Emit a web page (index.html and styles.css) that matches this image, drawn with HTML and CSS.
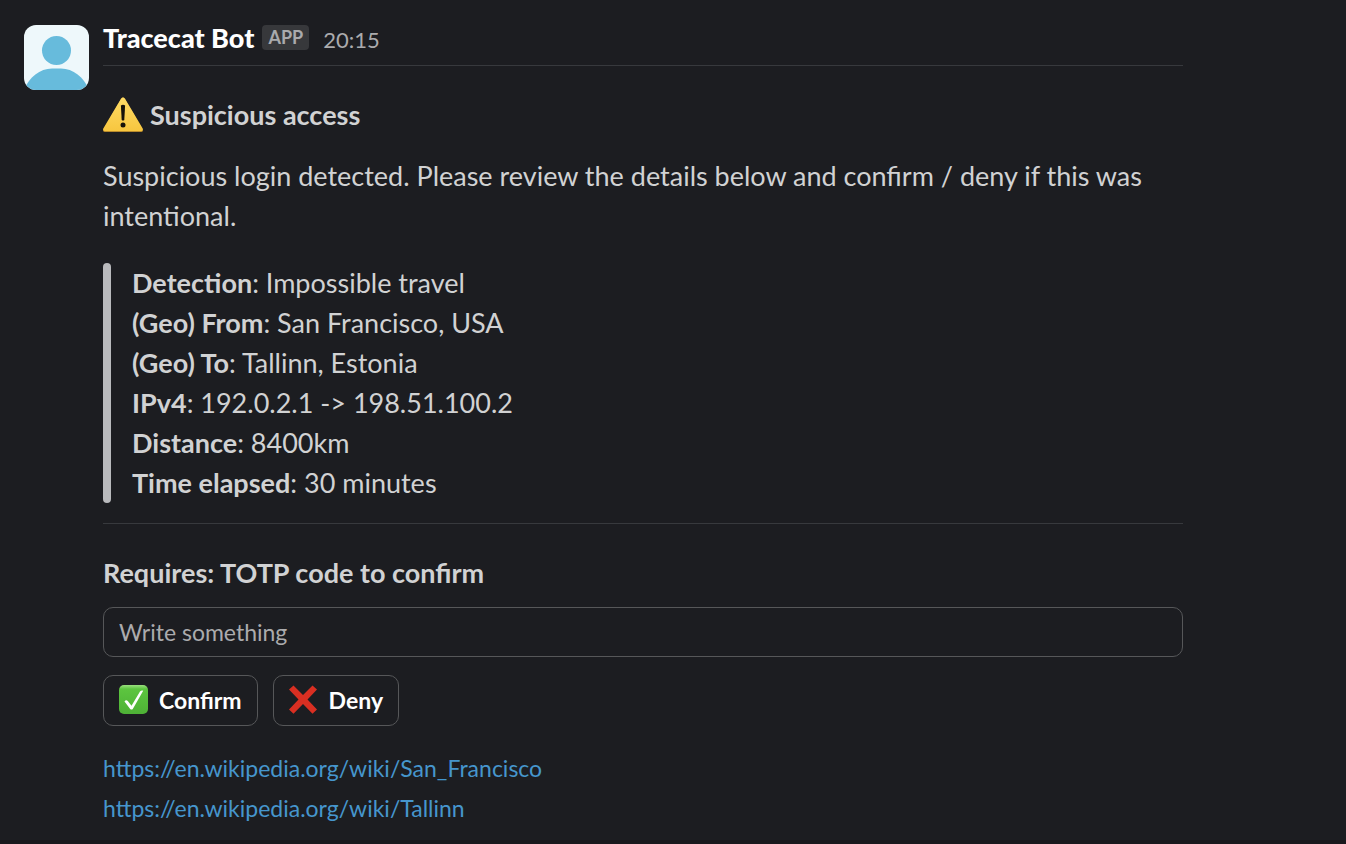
FILE: index.html
```html
<!DOCTYPE html>
<html lang="en">
<head>
<meta charset="utf-8">
<title>Tracecat Bot</title>
<link rel="stylesheet" href="styles.css">
</head>
<body>
<main class="message">
  <svg class="avatar" viewBox="0 0 65 65" role="img" aria-label="Tracecat Bot avatar">
    <rect width="65" height="65" fill="#eef8fb"/>
    <circle cx="32.500" cy="25.500" r="14.500" fill="#67bbdc"/>
    <path d="M0 65C5 52 16 43.500 28 43.500H37C49 43.500 60 52 65 65z" fill="#67bbdc"/>
  </svg>
  <div class="content">
    <header class="byline">
      <span class="name">Tracecat Bot</span>
      <span class="badge">APP</span>
      <time class="time">20:15</time>
    </header>
    <hr class="rule">
    <h1 class="title">
      <svg class="warning" viewBox="0 0 40 36" aria-hidden="true">
        <defs><linearGradient id="sun" x1="0" y1="0" x2="0" y2="1"><stop offset="0" stop-color="#ffdc65"/><stop offset="1" stop-color="#f7c63f"/></linearGradient></defs>
        <path d="M18 2q2-2.800 4 0L39.700 32.500q.6 2.500-1.700 2.500H2q-2.300 0-1.700-2.500z" fill="#b88a2c"/>
        <path d="M18 1.800q2-2.800 4 0L39.700 31.500q.6 2.500-1.700 2.500H2q-2.300 0-1.700-2.500z" fill="url(#sun)"/>
        <path d="M17.900 8.500q2.100-1.500 4.200 0l-.8 14.500q-1.300 1-2.600 0z" fill="#17130a"/>
        <circle cx="20" cy="28" r="2.500" fill="#17130a"/>
      </svg>
      Suspicious access
    </h1>
    <p class="intro">Suspicious login detected. Please review the details below and confirm / deny if this was intentional.</p>
    <blockquote class="details">
      <div><b>Detection</b>: Impossible travel</div>
      <div><b>(Geo) From</b>: San Francisco, USA</div>
      <div><b>(Geo) To</b>: Tallinn, Estonia</div>
      <div><b>IPv4</b>: 192.0.2.1 -&gt; 198.51.100.2</div>
      <div><b>Distance</b>: 8400km</div>
      <div><b>Time elapsed</b>: 30 minutes</div>
    </blockquote>
    <hr class="rule">
    <form class="form">
      <label class="label" for="code">Requires: TOTP code to confirm</label>
      <input class="field" id="code" type="text" placeholder="Write something">
      <div class="actions">
        <button class="button" type="button">
          <svg class="icon" viewBox="0 0 30 30" aria-hidden="true">
            <defs><linearGradient id="leaf" x1="0" y1="0" x2="0" y2="1"><stop offset="0" stop-color="#9be07f"/><stop offset=".14" stop-color="#5cc53f"/><stop offset="1" stop-color="#4eb136"/></linearGradient></defs>
            <rect width="29" height="29" rx="5" fill="url(#leaf)"/>
            <path d="M5.500 16.500q1.500-2 3.300-.5l3.700 4.700L21 6.500q1.500-1.500 3.200-.8L13.800 24q-1.300 1-2.600 0z" fill="#fff"/>
          </svg>
          Confirm
        </button>
        <button class="button" type="button">
          <svg class="icon" viewBox="0 0 30 30" aria-hidden="true"><path d="M4.500.5L14 10 23.500.5 28 4.500 18.500 14.500 28 24.500 23.500 28.800 14 19 4.500 28.800 0 24.500 9.500 14.500 0 4.500z" fill="#d92f22"/></svg>
          Deny
        </button>
      </div>
    </form>
    <nav class="links">
      <a href="https://en.wikipedia.org/wiki/San_Francisco">https://en.wikipedia.org/wiki/San_Francisco</a>
      <a href="https://en.wikipedia.org/wiki/Tallinn">https://en.wikipedia.org/wiki/Tallinn</a>
    </nav>
  </div>
</main>
</body>
</html>
```
FILE: styles.css
```css
* { box-sizing: border-box; }
body { margin: 0; min-height: 100vh; background: #1c1d21; color: #d1d2d3; font-family: Lato, sans-serif; font-size: 27px; line-height: 40px; border-bottom: 4px solid #19181c; }
.message { display: flex; gap: 14px; padding: 25px 24px 8px; }
.avatar { flex: none; width: 65px; height: 65px; border-radius: 12px; }
.content { flex: 1; max-width: 1080px; }
.byline { display: flex; align-items: baseline; height: 28px; line-height: 26px; }
.name { color: #fff; font-weight: 900; }
.badge { align-self: flex-start; margin: 0 14px 0 8px; padding: 0 6px; border-radius: 4px; background: #37383b; color: #a9aaad; font-size: 18px; font-weight: 700; line-height: 25px; }
.time { color: #ababad; font-size: 22px; }
.rule { height: 1px; margin: 12px 0 0; border: 0; background: #37393d; }
.title { display: flex; align-items: center; gap: 7px; margin: 29px 0 0; font-size: 27px; font-weight: 700; }
.warning { width: 40px; height: 36px; }
.intro { margin: 21px 0 0; }
.details { position: relative; margin: 27px 0 20px; padding-left: 29px; }
.details::before { content: ""; position: absolute; inset: 0 auto 0 0; width: 8px; border-radius: 4px; background: #b9babd; }
.form { margin-top: 29px; }
.label { display: block; font-weight: 700; }
.field { display: block; width: 100%; height: 50px; margin-top: 14px; padding: 0 15px; border: 1px solid #565759; border-radius: 10px; background: transparent; color: #d1d2d3; font: 23px Lato, sans-serif; }
.field::placeholder { color: #ababad; opacity: 1; }
.actions { display: flex; gap: 15px; margin-top: 18px; }
.button { display: flex; align-items: center; gap: 10px; height: 51px; padding: 0 15px 2px; border: 1px solid #565759; border-radius: 10px; background: transparent; color: #fff; font: 700 23px Lato, sans-serif; }
.icon { width: 30px; height: 30px; }
.links { display: flex; flex-direction: column; align-items: flex-start; margin-top: 22px; font-size: 23px; }
.links a { color: #4696cd; text-decoration: none; }
```
